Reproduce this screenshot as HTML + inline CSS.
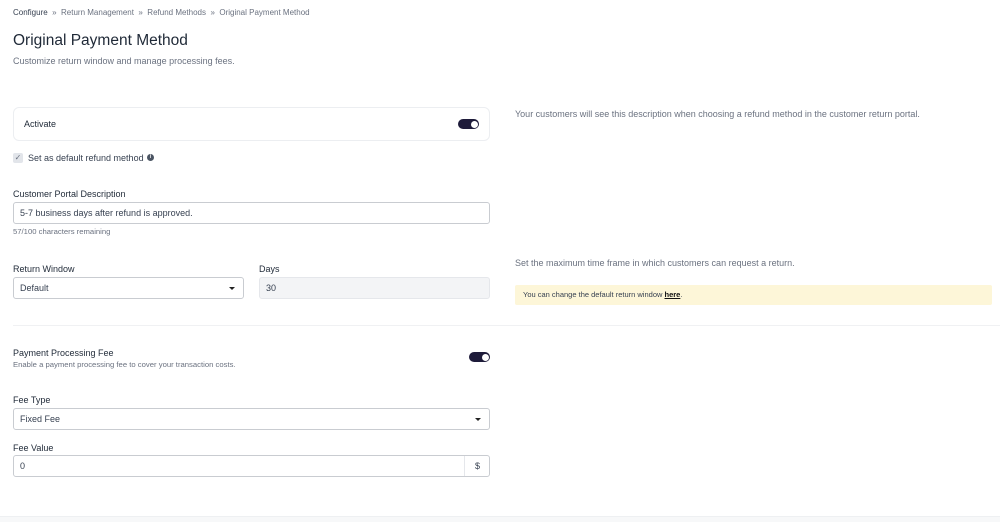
<!DOCTYPE html>
<html><head><meta charset="utf-8"><style>
*{box-sizing:border-box;margin:0;padding:0}
body{width:1000px;height:522px;background:#fff;font-family:"Liberation Sans",sans-serif;position:relative;overflow:hidden;color:#1f2937}
.a{position:absolute;white-space:nowrap}
.lbl{font-size:9px;color:#1f2937}
.inp{position:absolute;border:1px solid #c9ccd1;border-radius:3px;background:#fff;font-size:9px;color:#374151;padding-left:6px;display:flex;align-items:center}
.tog{position:absolute;width:21px;height:10px;border-radius:5px;background:#1e1b3a}
.tog:after{content:"";position:absolute;right:1.5px;top:1.5px;width:7px;height:7px;border-radius:50%;background:#fff}
.caret{position:absolute;right:8px;top:50%;margin-top:-1px;border-left:3px solid transparent;border-right:3px solid transparent;border-top:3px solid #222}
.g{color:#6b7280}
</style></head><body>
<div class="a" style="left:13px;top:8px;font-size:8px;color:#6b7280"><span style="color:#374151">Configure</span> &nbsp;»&nbsp; Return Management &nbsp;»&nbsp; Refund Methods &nbsp;»&nbsp; Original Payment Method</div>
<div class="a" style="left:13px;top:32px;font-size:15.5px;color:#1f2937">Original Payment Method</div>
<div class="a g" style="left:13px;top:56px;font-size:9px">Customize return window and manage processing fees.</div>

<div class="a" style="left:13px;top:107px;width:477px;height:34px;border:1px solid #eceef1;border-radius:6px"></div>
<div class="a lbl" style="left:24px;top:119px">Activate</div>
<div class="tog" style="left:458px;top:119px"></div>

<div class="a" style="left:13px;top:153px;width:10px;height:10px;background:#e2e5ea;border-radius:2px;font-size:8px;color:#6b7280;text-align:center;line-height:10px">✓</div>
<div class="a" style="left:28px;top:153px;font-size:9px;color:#374151">Set as default refund method</div>
<div class="a" style="left:147px;top:154px;width:7px;height:7px;border-radius:50%;background:#4b5563;color:#fff;font-size:5px;text-align:center;line-height:7px;font-weight:bold">i</div>

<div class="a lbl" style="left:13px;top:189px">Customer Portal Description</div>
<div class="inp" style="left:13px;top:202px;width:477px;height:22px">5-7 business days after refund is approved.</div>
<div class="a g" style="left:13px;top:227px;font-size:7.7px">57/100 characters remaining</div>

<div class="a lbl" style="left:13px;top:264px">Return Window</div>
<div class="inp" style="left:13px;top:277px;width:231px;height:22px">Default<span class="caret"></span></div>
<div class="a lbl" style="left:259px;top:264px">Days</div>
<div class="inp" style="left:259px;top:277px;width:231px;height:22px;background:#f3f4f6;border-color:#e5e7eb">30</div>

<div class="a" style="left:13px;top:325px;width:987px;border-top:1px solid #f0f1f3"></div>

<div class="a lbl" style="left:13px;top:348px">Payment Processing Fee</div>
<div class="a g" style="left:13px;top:360px;font-size:7.7px">Enable a payment processing fee to cover your transaction costs.</div>
<div class="tog" style="left:469px;top:352px"></div>

<div class="a lbl" style="left:13px;top:395px">Fee Type</div>
<div class="inp" style="left:13px;top:408px;width:477px;height:22px">Fixed Fee<span class="caret"></span></div>
<div class="a lbl" style="left:13px;top:443px">Fee Value</div>
<div class="inp" style="left:13px;top:455px;width:477px;height:22px">0<span style="position:absolute;left:450px;top:0;bottom:0;border-left:1px solid #e5e7eb;width:26px;text-align:center;line-height:20px">$</span></div>

<div class="a" style="left:0;top:516px;width:1000px;height:6px;background:#f7f8f9;border-top:1px solid #eef0f2"></div>

<div class="a g" style="left:515px;top:109px;font-size:9px">Your customers will see this description when choosing a refund method in the customer return portal.</div>
<div class="a g" style="left:515px;top:258px;font-size:9px">Set the maximum time frame in which customers can request a return.</div>
<div class="a" style="left:515px;top:285px;width:477px;height:20px;background:#fdf6d8;border-radius:2px;font-size:7.5px;color:#374151;padding-left:8px;line-height:20px">You can change the default return window <b style="text-decoration:underline;color:#111">here</b>.</div>
</body></html>
